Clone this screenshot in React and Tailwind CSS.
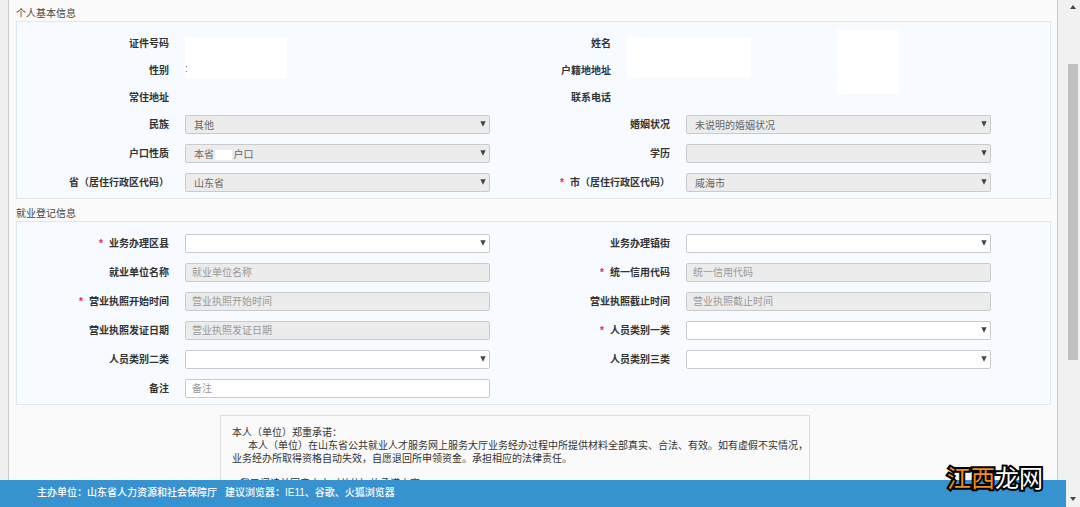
import React from "react";

const fieldBase =
  "block h-[19px] w-full appearance-none rounded-[2px] border border-[#c8cbcd] px-1.5 text-[10px] leading-[17px] outline-none placeholder:text-[#999]";

function Field({ id, label, required, type = "select", value, disabled, children }) {
  const tone = disabled ? "bg-[#ececec] text-[#666]" : "bg-white text-[#555]";
  return (
    <div className="flex items-center pr-7">
      <label htmlFor={id} className="w-[168px] shrink-0 pr-4 text-right font-bold">
        {required && <span className="mr-1.5 text-[#f0263c]">*</span>}
        {label}
      </label>
      <div className="relative min-w-0 flex-1">
        {type === "select" ? (
          <>
            <select id={id} disabled={disabled} className={`${fieldBase} ${tone} pt-px pl-2 opacity-100`}>
              <option>{value || ""}</option>
            </select>
            <svg viewBox="0 0 6 6" className="pointer-events-none absolute top-1.5 right-1 size-1.5" fill="#444">
              <path d="M0.3 0.2h5.4L3 5.8z" />
            </svg>
            {children}
          </>
        ) : (
          <input id={id} type="text" placeholder={label} disabled={disabled} className={`${fieldBase} ${tone}`} />
        )}
      </div>
    </div>
  );
}

function Section({ title, children }) {
  return (
    <section className="flex flex-col">
      <h2 className="h-[14px] text-[10px] leading-[13px] font-normal text-[#444]">{title}</h2>
      <div className="border border-[#dde9f0] bg-[#f7fbff] pr-[31px]">{children}</div>
    </section>
  );
}

function InfoLabel({ children }) {
  return <dt className="pr-4 text-right font-bold">{children}</dt>;
}

export default function App() {
  return (
    <div
      lang="zh-CN"
      className="relative flex h-screen overflow-hidden bg-[#f0f0f0] font-['Liberation_Sans','Noto_Sans_CJK_SC',sans-serif] text-[10px] leading-[13px] text-[#333]"
    >
      <div className="flex min-w-0 flex-1 flex-col">
        <main className="mx-2 min-h-0 flex-1 overflow-hidden border-x border-[#ccc] bg-[#fafafa] pt-[7px] pr-[6px] pl-[7px]">
          <form>
            <Section title="个人基本信息">
              <div className="flex pt-2">
                <dl className="grid flex-1 auto-rows-[27px] grid-cols-[168px_1fr] items-center">
                  <InfoLabel>证件号码</InfoLabel>
                  <dd className="col-start-2 row-span-2 mt-[7px] flex h-[42px] w-[102px] items-end self-start bg-white pb-1 text-[#777]">
                    :
                  </dd>
                  <InfoLabel>性别</InfoLabel>
                  <InfoLabel>常住地址</InfoLabel>
                  <dd />
                </dl>
                <dl className="grid w-[386px] auto-rows-[27px] grid-cols-[110px_1fr] items-center">
                  <InfoLabel>姓名</InfoLabel>
                  <dd className="col-start-2 row-span-2 mt-[7px] h-10 w-[124px] self-start bg-white" />
                  <InfoLabel>户籍地地址</InfoLabel>
                  <InfoLabel>联系电话</InfoLabel>
                  <dd />
                </dl>
                <div className="mr-[120px] -ml-[66px] h-16 w-[62px] bg-white" />
              </div>
              <div className="grid grid-cols-2 gap-y-2.5 pt-1 pb-1.5">
                <Field id="nation" label="民族" value="其他" disabled />
                <Field id="marriage" label="婚姻状况" value="未说明的婚姻状况" disabled />
                <Field id="household" label="户口性质" value={"本省\u00a0\u00a0\u00a0\u00a0\u00a0\u00a0\u00a0户口"} disabled>
                  <span className="absolute top-1.5 left-[30px] h-2.5 w-[17px] bg-white" />
                </Field>
                <Field id="education" label="学历" disabled />
                <Field id="province" label="省（居住行政区代码）" value="山东省" disabled />
                <Field id="city" label="市（居住行政区代码）" value="威海市" required disabled />
              </div>
            </Section>

            <div className="pt-2">
              <Section title="就业登记信息">
                <div className="grid grid-cols-2 gap-y-2.5 pt-3 pb-1.5">
                  <Field id="county" label="业务办理区县" required />
                  <Field id="street" label="业务办理镇街" />
                  <Field id="company" label="就业单位名称" type="text" disabled />
                  <Field id="credit" label="统一信用代码" type="text" required disabled />
                  <Field id="start" label="营业执照开始时间" type="text" required disabled />
                  <Field id="end" label="营业执照截止时间" type="text" disabled />
                  <Field id="issued" label="营业执照发证日期" type="text" disabled />
                  <Field id="type1" label="人员类别一类" required />
                  <Field id="type2" label="人员类别二类" />
                  <Field id="type3" label="人员类别三类" />
                  <Field id="remark" label="备注" type="text" />
                </div>
              </Section>
            </div>

            <div className="pr-[37px]">
              <div className="mx-auto mt-2.5 w-[590px] border border-[#ddd] px-[11px] pt-2.5 whitespace-nowrap">
                <p>本人（单位）郑重承诺：</p>
                <p className="pl-4">
                  本人（单位）在山东省公共就业人才服务网上服务大厅业务经办过程中所提供材料全部真实、合法、有效。如有虚假不实情况，
                </p>
                <p>业务经办所取得资格自动失效，自愿退回所申领资金。承担相应的法律责任。</p>
                <p className="pt-3 pl-2">我已阅读并同意本人（单位）的承诺内容</p>
              </div>
            </div>
          </form>
        </main>
        <footer className="h-[27px] shrink-0 bg-[#3792d0] pl-[37px] leading-[26px] font-medium text-white">
          主办单位：山东省人力资源和社会保障厅<span className="ml-2">建议浏览器：IE11、谷歌、火狐浏览器</span>
        </footer>
      </div>

      <div className="flex w-[14px] shrink-0 flex-col items-center bg-[#f1f1f1]">
        <svg viewBox="0 0 6 4" className="mt-[5px] h-1 w-1.5" fill="#444">
          <path d="M0 4L3 0l3 4z" />
        </svg>
        <div className="mt-[55px] h-[296px] w-2.5 bg-[#c1c1c1]" />
        <svg viewBox="0 0 6 4" className="mt-auto mb-1.5 h-1 w-1.5" fill="#444">
          <path d="M0 0l3 4 3-4z" />
        </svg>
      </div>

      <div className="absolute right-[37px] bottom-3 font-['Noto_Sans_CJK_SC',sans-serif] text-2xl leading-[36px] font-normal text-white [-webkit-text-stroke:4px_black] [paint-order:stroke_fill]">
        <span className="text-[#f28c1b]">江西</span>龙网
      </div>
    </div>
  );
}
